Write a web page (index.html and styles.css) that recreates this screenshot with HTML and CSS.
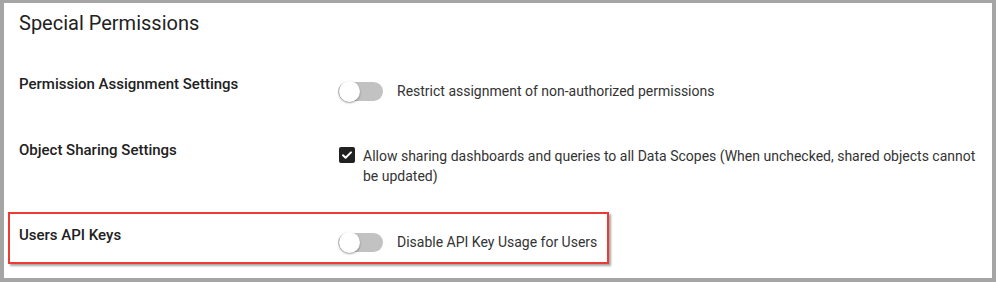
FILE: index.html
```html
<!DOCTYPE html>
<html lang="en">
  <head>
    <meta charset="UTF-8" />
    <meta name="viewport" content="width=device-width, initial-scale=1.0" />
    <title>Special Permissions</title>
    <link rel="stylesheet" href="styles.css">
  </head>
  <body>
    <div class="frame">
      <h2 class="title">Special Permissions</h2>

      <div class="row">
        <div class="row-label">Permission Assignment Settings</div>
        <label class="control toggle-control">
          <span class="toggle"><span class="knob"></span></span>
          <span>Restrict assignment of non-authorized permissions</span>
        </label>
      </div>

      <div class="row">
        <div class="row-label">Object Sharing Settings</div>
        <label class="control check-control">
          <span class="checkbox">
            <svg width="12" height="12" viewBox="0 0 12 12">
              <path d="M2 6.2l2.6 2.5L10 3.4" fill="none" stroke="#fff" stroke-width="2" stroke-linecap="round" stroke-linejoin="round" />
            </svg>
          </span>
          <span>Allow sharing dashboards and queries to all Data Scopes (When unchecked, shared objects cannot be updated)</span>
        </label>
      </div>

      <div class="row highlight">
        <div class="row-label">Users API Keys</div>
        <label class="control toggle-control">
          <span class="toggle"><span class="knob"></span></span>
          <span>Disable API Key Usage for Users</span>
        </label>
      </div>
    </div>
  </body>
</html>
```

FILE: styles.css
```css
body {
  margin: 0;
  font-family: Roboto, "Liberation Sans", Arial, sans-serif;
  background-color: #a5a5a5;
}
.frame {
  box-sizing: border-box;
  width: 996px;
  height: 282px;
  overflow: hidden;
  background-color: white;
  border-style: solid;
  border-color: #a5a5a5;
  border-width: 3px 4px 4px 4px;
  padding: 8px 15px 0 15px;
}
.title {
  margin: 0 0 26px;
  font-size: 20px;
  line-height: 24px;
  font-weight: 400;
  color: #222;
}
.row {
  display: grid;
  grid-template-columns: 319px 1fr;
  margin: 0 -11px 16px;
  padding: 11px 9px 8px;
  border: 2px solid transparent;
}
.row.highlight {
  width: 601px;
  box-sizing: border-box;
  padding-bottom: 10px;
  border-color: #ec3b35;
  box-shadow: 2px 2px 2px rgba(0, 0, 0, 0.35);
}
.row-label {
  font-size: 15px;
  line-height: 20px;
  font-weight: 500;
  color: #212121;
}
.control {
  display: flex;
  font-size: 14px;
  line-height: 20px;
  color: #333;
}
.toggle-control {
  align-items: center;
  gap: 14px;
  margin-top: 7px;
  white-space: nowrap;
}
.check-control {
  align-items: flex-start;
  gap: 8px;
  margin-top: 6px;
}
.toggle {
  position: relative;
  flex: none;
  width: 45px;
  height: 19px;
  border-radius: 10px;
  background-color: #c2c2c2;
}
.knob {
  position: absolute;
  left: 1px;
  top: -1px;
  width: 21px;
  height: 21px;
  border-radius: 50%;
  background-color: #fff;
  box-shadow: 0 1px 2px rgba(0, 0, 0, 0.4);
}
.checkbox {
  flex: none;
  display: flex;
  align-items: center;
  justify-content: center;
  width: 16px;
  height: 16px;
  margin: 1px 0 0 1px;
  border-radius: 2px;
  background-color: #212121;
}
```
